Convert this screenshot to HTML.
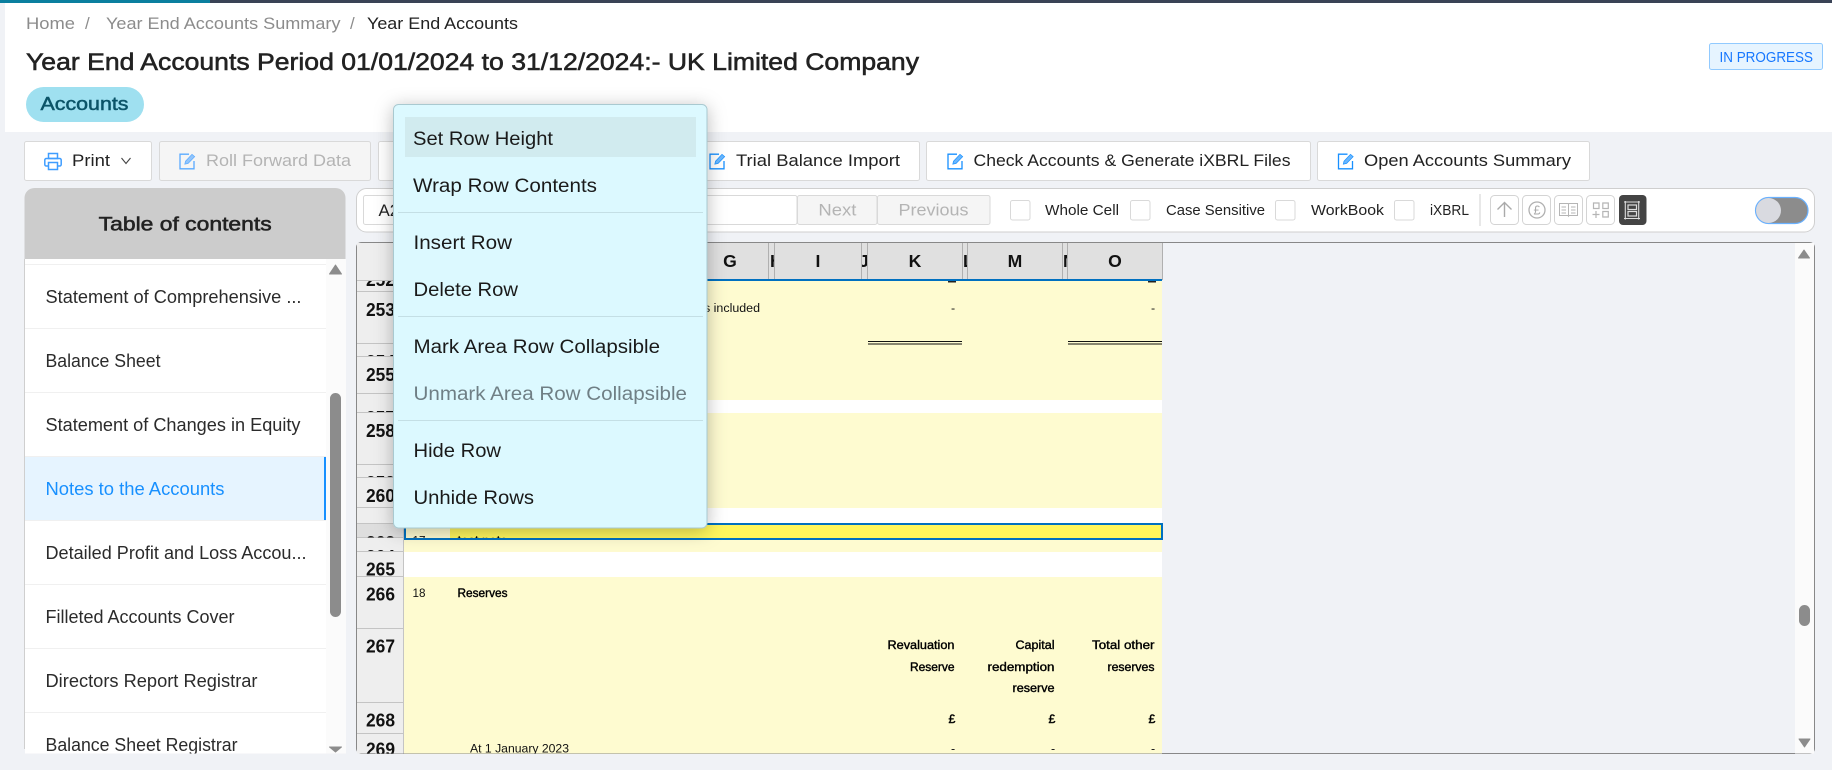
<!DOCTYPE html>
<html lang="en"><head><meta charset="utf-8"><title>Year End Accounts</title>
<style>
html,body{margin:0;padding:0;background:#f0f2f6;width:1832px;height:770px;overflow:hidden}
svg{display:block;font-family:"Liberation Sans",Arial,sans-serif}
.c{font-size:12.4px;fill:#111}
.b{font-size:12.4px;fill:#000;stroke:#000;stroke-width:.4px}
.n{font-size:18px;font-weight:bold;fill:#111}
.h{font-size:17.6px;font-weight:bold;fill:#111}
.s{font-size:18.6px;fill:#2b2b2b}
.m{font-size:19.3px;fill:#1a1a1a}
.t{font-size:16.9px;fill:#222}
.l{font-size:14.5px;fill:#222}
</style></head>
<body>
<svg xmlns="http://www.w3.org/2000/svg" width="1832" height="770" viewBox="0 0 1832 770">
<defs>
<filter id="sh" x="-20%" y="-20%" width="140%" height="140%"><feDropShadow dx="0" dy="3" stdDeviation="9" flood-color="#000" flood-opacity=".27"/></filter>
<clipPath id="side"><rect x="25" y="259" width="320" height="494.5"/></clipPath>
<clipPath id="sheet"><rect x="357" y="243" width="1457" height="510.5"/></clipPath>
<clipPath id="r252"><rect x="357" y="281" width="47" height="10"/></clipPath>
<clipPath id="r254"><rect x="357" y="343" width="47" height="13"/></clipPath>
<clipPath id="r257"><rect x="357" y="394" width="47" height="18"/></clipPath>
<clipPath id="r259"><rect x="357" y="464" width="47" height="13"/></clipPath>
<clipPath id="r263"><rect x="357" y="523" width="47" height="14.500"/></clipPath>
<clipPath id="r264"><rect x="357" y="538" width="47" height="13"/></clipPath>
<clipPath id="sel"><rect x="404" y="525" width="758" height="13"/></clipPath>
<clipPath id="cH"><rect x="769" y="243" width="5" height="36"/></clipPath>
<clipPath id="cJ"><rect x="862" y="243" width="5" height="36"/></clipPath>
<clipPath id="cL"><rect x="963" y="243" width="4" height="36"/></clipPath>
<clipPath id="cN"><rect x="1063" y="243" width="4" height="36"/></clipPath>
<g id="edit" fill="none"><path d="M10 1.200H1v14.600h14V8" stroke="currentColor" stroke-width="1.300"/><path d="M5.800 11.200l.7-3L13 1.300l2.700 2.400-6.600 6.700z" fill="currentColor" fill-opacity=".65" stroke="currentColor" stroke-width=".7"/></g>
</defs>

<!-- page / header -->
<rect width="1832" height="770" fill="#f0f2f6"/>
<rect x="5" y="3" width="1827" height="129" fill="#fff"/>
<rect width="1832" height="3" fill="#3a4356"/>
<rect width="210" height="3" fill="#0a7f9f"/>

<!-- breadcrumb -->
<g font-size="16.9" fill="#8c8c8c">
<text x="26" y="29" textLength="49" lengthAdjust="spacingAndGlyphs">Home</text>
<text x="85" y="29">/</text>
<text x="106" y="29" textLength="234.500" lengthAdjust="spacingAndGlyphs">Year End Accounts Summary</text>
<text x="350" y="29">/</text>
<text x="367" y="29" textLength="151" lengthAdjust="spacingAndGlyphs" fill="#222">Year End Accounts</text>
</g>
<text x="26" y="70" font-size="24" fill="#222" stroke="#222" stroke-width=".55" textLength="893" lengthAdjust="spacingAndGlyphs">Year End Accounts Period 01/01/2024 to 31/12/2024:- UK Limited Company</text>
<rect x="26" y="87" width="118" height="35" rx="17.500" fill="#9fe0f0"/>
<text x="40.500" y="110" font-size="18.600" fill="#0b5468" stroke="#0b5468" stroke-width=".5" textLength="88" lengthAdjust="spacingAndGlyphs">Accounts</text>
<rect x="1709.500" y="43.500" width="113" height="26" rx="2" fill="#e6f4ff" stroke="#91caff"/>
<text x="1719.500" y="62" font-size="14.500" fill="#1677ff" textLength="93.500" lengthAdjust="spacingAndGlyphs">IN PROGRESS</text>

<!-- toolbar -->
<g stroke="#d9d9d9" fill="#fff">
<rect x="24.500" y="141.500" width="127" height="39" rx="2"/>
<rect x="159.500" y="141.500" width="211" height="39" rx="2" fill="#f5f5f5"/>
<rect x="378.500" y="141.500" width="120" height="39" rx="2" fill="#fff"/>
<rect x="693.500" y="141.500" width="226" height="39" rx="2"/>
<rect x="926.500" y="141.500" width="384" height="39" rx="2"/>
<rect x="1317.500" y="141.500" width="272" height="39" rx="2"/>
</g>
<g fill="none" stroke="#3f9dff" stroke-width="1.500">
<rect x="48.500" y="153.500" width="9" height="5"/>
<rect x="44.800" y="158.500" width="16.400" height="7.500" rx="1.500"/>
<rect x="48.500" y="162.500" width="9" height="7" fill="#fff"/>
</g>
<text x="72" y="166" class="t" textLength="38" lengthAdjust="spacingAndGlyphs">Print</text>
<path d="M121.500 158l4.500 5.500 4.500-5.500" fill="none" stroke="#444" stroke-width="1.100"/>
<use href="#edit" x="179" y="153" color="#5aaaff"/>
<text x="206" y="166" class="t" style="fill:#b4b4b4" textLength="145" lengthAdjust="spacingAndGlyphs">Roll Forward Data</text>
<use href="#edit" x="709" y="153" color="#1890ff"/>
<text x="736" y="166" class="t" textLength="164" lengthAdjust="spacingAndGlyphs">Trial Balance Import</text>
<use href="#edit" x="947" y="153" color="#1890ff"/>
<text x="973.500" y="166" class="t" textLength="317" lengthAdjust="spacingAndGlyphs">Check Accounts &amp; Generate iXBRL Files</text>
<use href="#edit" x="1337.500" y="153" color="#1890ff"/>
<text x="1364" y="166" class="t" textLength="207" lengthAdjust="spacingAndGlyphs">Open Accounts Summary</text>

<!-- sidebar -->
<path d="M24.500 259v-61a10 10 0 0 1 10-10h301a10 10 0 0 1 10 10v61z" fill="#cccccc"/>
<text x="98.700" y="230.500" font-size="19.300" fill="#222" stroke="#222" stroke-width=".55" textLength="173" lengthAdjust="spacingAndGlyphs">Table of contents</text>
<rect x="25" y="259" width="321" height="494.500" fill="#fff"/>
<rect x="326" y="259" width="20" height="494.500" fill="#fbfbfb"/>
<rect x="24" y="259" width="1" height="490" fill="#cfcfcf"/>
<rect x="25" y="456" width="301" height="64" fill="#e6f4ff"/>
<rect x="324" y="456" width="2" height="64" fill="#1890ff"/>
<g fill="#f0f0f0">
<rect x="25" y="264" width="301" height="1"/><rect x="25" y="328" width="301" height="1"/>
<rect x="25" y="392" width="301" height="1"/><rect x="25" y="456" width="301" height="1"/>
<rect x="25" y="520" width="301" height="1"/><rect x="25" y="584" width="301" height="1"/>
<rect x="25" y="648" width="301" height="1"/><rect x="25" y="712" width="301" height="1"/>
</g>
<g clip-path="url(#side)">
<text x="45.500" y="303" class="s" textLength="256" lengthAdjust="spacingAndGlyphs">Statement of Comprehensive ...</text>
<text x="45.500" y="367" class="s" textLength="115" lengthAdjust="spacingAndGlyphs">Balance Sheet</text>
<text x="45.500" y="431" class="s" textLength="255" lengthAdjust="spacingAndGlyphs">Statement of Changes in Equity</text>
<text x="45.500" y="495" class="s" style="fill:#1890ff" textLength="179" lengthAdjust="spacingAndGlyphs">Notes to the Accounts</text>
<text x="45.500" y="559" class="s" textLength="261" lengthAdjust="spacingAndGlyphs">Detailed Profit and Loss Accou...</text>
<text x="45.500" y="623" class="s" textLength="189" lengthAdjust="spacingAndGlyphs">Filleted Accounts Cover</text>
<text x="45.500" y="687" class="s" textLength="212" lengthAdjust="spacingAndGlyphs">Directors Report Registrar</text>
<text x="45.500" y="751" class="s" textLength="192" lengthAdjust="spacingAndGlyphs">Balance Sheet Registrar</text>
</g>
<path d="M335.500 265l6 9h-12z" fill="#8c8c8c" stroke="#8c8c8c" stroke-linejoin="round"/>
<path d="M335.500 752l6-5h-12z" fill="#8c8c8c" stroke="#8c8c8c" stroke-linejoin="round"/>
<rect x="330" y="393" width="11" height="224" rx="5.500" fill="#8c8c8c"/>

<!-- find bar -->
<rect x="356.500" y="188.500" width="1458" height="43.500" rx="10" fill="#fff" stroke="#cfcfcf"/>
<rect x="363.500" y="195.500" width="433.500" height="29" rx="2" fill="#fff" stroke="#d9d9d9"/>
<text x="378.500" y="216" class="t">A2</text>
<rect x="797.500" y="195.500" width="79.500" height="29" rx="2" fill="#f5f5f5" stroke="#d9d9d9"/>
<rect x="877.500" y="195.500" width="112.500" height="29" rx="2" fill="#f5f5f5" stroke="#d9d9d9"/>
<text x="818.400" y="215.500" class="t" style="fill:#b4b4b4" textLength="38" lengthAdjust="spacingAndGlyphs">Next</text>
<text x="898.500" y="215.500" class="t" style="fill:#b4b4b4" textLength="70" lengthAdjust="spacingAndGlyphs">Previous</text>
<g fill="#fff" stroke="#d9d9d9">
<rect x="1010.500" y="200.500" width="19.500" height="19.500" rx="2"/>
<rect x="1130.500" y="200.500" width="19.500" height="19.500" rx="2"/>
<rect x="1275.500" y="200.500" width="19.500" height="19.500" rx="2"/>
<rect x="1394.500" y="200.500" width="19.500" height="19.500" rx="2"/>
</g>
<text x="1045" y="215" class="l" textLength="74" lengthAdjust="spacingAndGlyphs">Whole Cell</text>
<text x="1166" y="215" class="l" textLength="99" lengthAdjust="spacingAndGlyphs">Case Sensitive</text>
<text x="1311" y="215" class="l" textLength="73" lengthAdjust="spacingAndGlyphs">WorkBook</text>
<text x="1430" y="215" class="l" textLength="39" lengthAdjust="spacingAndGlyphs">iXBRL</text>
<rect x="1479.500" y="194" width="1" height="32" fill="#d0d0d0"/>
<g fill="#fff" stroke="#d4d4d4">
<rect x="1490.500" y="195.500" width="28" height="29" rx="4"/>
<rect x="1522.500" y="195.500" width="28" height="29" rx="4"/>
<rect x="1554.500" y="195.500" width="28" height="29" rx="4"/>
<rect x="1586.500" y="195.500" width="28" height="29" rx="4"/>
</g>
<rect x="1619" y="195" width="27.500" height="30" rx="4" fill="#444"/>
<path d="M1504.500 217v-14.500M1497.500 209.500l7-7 7 7" fill="none" stroke="#aaa" stroke-width="1.400"/>
<circle cx="1537" cy="210" r="8" fill="none" stroke="#b0b0b0" stroke-width="1.300"/>
<text x="1537" y="214.500" font-size="12.500" text-anchor="middle" fill="#aaa">£</text>
<path d="M1559.500 203.500h8.500l.5.800.5-.8h8.500v12h-8.500l-.5.800-.5-.8h-8.500zM1568.500 204.500v11M1561.500 207h4.500M1561.500 210h4.500M1561.500 213h4.500M1571 207h4.500M1571 210h4.500M1571 213h4.500" fill="none" stroke="#b5b5b5" stroke-width="1"/>
<path d="M1593.500 203h5.500v5.500h-5.500zM1602.800 203h5.500v5.500h-5.500zM1602.800 211.500h5.500v5.500h-5.500zM1592.500 214.500h7M1596 211v7" fill="none" stroke="#b5b5b5" stroke-width="1.200"/>
<path d="M1624 202h16M1624 218.500h16M1625.300 201v18.500M1638.700 201v18.500" fill="none" stroke="#ddd" stroke-width="1.100"/>
<rect x="1628" y="205" width="8.500" height="4.500" fill="none" stroke="#ddd" stroke-width="1.200"/>
<rect x="1628" y="211.500" width="8.500" height="4.500" fill="none" stroke="#ddd" stroke-width="1.200"/>
<rect x="1755.500" y="197.500" width="52.500" height="26" rx="13" fill="#8c8c8c" stroke="#69b1ff" stroke-width="1.200"/>
<circle cx="1768.500" cy="210.500" r="12.500" fill="#d9dae0"/>

<!-- sheet -->
<rect x="356.500" y="242.500" width="1458" height="511" rx="5" fill="#f0f2f6" stroke="#888"/>
<g clip-path="url(#sheet)">
<rect x="1795" y="243" width="19" height="511" fill="#fbfbfb"/>
<rect x="357" y="243" width="805" height="36" fill="#e0e0e0"/>
<rect x="357" y="243" width="47" height="511" fill="#eeeeee"/>
<rect x="404" y="281" width="758" height="119" fill="#fefbd0"/>
<rect x="404" y="400" width="758" height="13" fill="#fff"/>
<rect x="404" y="413" width="758" height="95" fill="#fefbd0"/>
<rect x="404" y="508" width="758" height="15" fill="#fff"/>
<rect x="404" y="523" width="758" height="29" fill="#fefbd0"/>
<rect x="404" y="552" width="758" height="25" fill="#fff"/>
<rect x="404" y="577" width="758" height="177" fill="#fefbd0"/>
<rect x="450" y="525" width="712" height="13" fill="#fff65c"/>
<rect x="357" y="523" width="47" height="15" fill="#dedede"/>
<rect x="404" y="279" width="758" height="2" fill="#0070c0"/>

<!-- column separators -->
<g fill="#b0b0b0">
<rect x="404" y="243" width="1" height="36"/><rect x="768" y="243" width="1" height="36"/><rect x="774" y="243" width="1" height="36"/>
<rect x="861" y="243" width="1" height="36"/><rect x="867" y="243" width="1" height="36"/>
<rect x="962" y="243" width="1" height="36"/><rect x="967" y="243" width="1" height="36"/>
<rect x="1062" y="243" width="1" height="36"/><rect x="1067" y="243" width="1" height="36"/>
<rect x="1162" y="243" width="1" height="37"/>
</g>
<text x="730" y="267" class="h" text-anchor="middle">G</text>
<text x="770" y="267" class="h" clip-path="url(#cH)">H</text>
<text x="818" y="267" class="h" text-anchor="middle">I</text>
<text x="859" y="267" class="h" clip-path="url(#cJ)">J</text>
<text x="915" y="267" class="h" text-anchor="middle">K</text>
<text x="963" y="267" class="h" clip-path="url(#cL)">L</text>
<text x="1015" y="267" class="h" text-anchor="middle">M</text>
<text x="1063" y="267" class="h" clip-path="url(#cN)">N</text>
<text x="1115" y="267" class="h" text-anchor="middle">O</text>

<!-- row separators -->
<g fill="#c4c4c4">
<rect x="357" y="280" width="47" height="1"/><rect x="357" y="291" width="47" height="1"/><rect x="357" y="343" width="47" height="1"/>
<rect x="357" y="356" width="47" height="1"/><rect x="357" y="393" width="47" height="1"/><rect x="357" y="412" width="47" height="1"/>
<rect x="357" y="464" width="47" height="1"/><rect x="357" y="477" width="47" height="1"/><rect x="357" y="507" width="47" height="1"/>
<rect x="357" y="523" width="47" height="1"/><rect x="357" y="537" width="47" height="1"/><rect x="357" y="551" width="47" height="1"/>
<rect x="357" y="576" width="47" height="1"/><rect x="357" y="628" width="47" height="1"/><rect x="357" y="702" width="47" height="1"/>
<rect x="357" y="733" width="47" height="1"/>
<rect x="403" y="243" width="1" height="511"/>
</g>

<!-- row numbers -->
<g>
<text x="366" y="286" class="n" textLength="29" lengthAdjust="spacingAndGlyphs" clip-path="url(#r252)">252</text>
<text x="366" y="316" class="n" textLength="29" lengthAdjust="spacingAndGlyphs">253</text>
<text x="366" y="368" class="n" textLength="29" lengthAdjust="spacingAndGlyphs" clip-path="url(#r254)">254</text>
<text x="366" y="381" class="n" textLength="29" lengthAdjust="spacingAndGlyphs">255</text>
<text x="366" y="424" class="n" textLength="29" lengthAdjust="spacingAndGlyphs" clip-path="url(#r257)">257</text>
<text x="366" y="437" class="n" textLength="29" lengthAdjust="spacingAndGlyphs">258</text>
<text x="366" y="489" class="n" textLength="29" lengthAdjust="spacingAndGlyphs" clip-path="url(#r259)">259</text>
<text x="366" y="502" class="n" textLength="29" lengthAdjust="spacingAndGlyphs">260</text>
<text x="366" y="549" class="n" textLength="29" lengthAdjust="spacingAndGlyphs" clip-path="url(#r263)">263</text>
<text x="366" y="563" class="n" textLength="29" lengthAdjust="spacingAndGlyphs" clip-path="url(#r264)">264</text>
<text x="366" y="575.500" class="n" textLength="29" lengthAdjust="spacingAndGlyphs">265</text>
<text x="366" y="600.500" class="n" textLength="29" lengthAdjust="spacingAndGlyphs">266</text>
<text x="366" y="652.500" class="n" textLength="29" lengthAdjust="spacingAndGlyphs">267</text>
<text x="366" y="726.500" class="n" textLength="29" lengthAdjust="spacingAndGlyphs">268</text>
<text x="366" y="755.500" class="n" textLength="29" lengthAdjust="spacingAndGlyphs">269</text>
</g>

<!-- cells -->
<rect x="948" y="281" width="8" height="1.500" fill="#222"/><rect x="1148" y="281" width="8" height="1.500" fill="#222"/>
<text x="704" y="312" class="c" textLength="56" lengthAdjust="spacingAndGlyphs">s included</text>
<text x="951" y="312" class="c">-</text><text x="1151" y="312" class="c">-</text>
<g fill="#111">
<rect x="868" y="341" width="94" height="1"/><rect x="868" y="343.500" width="94" height="1"/>
<rect x="1068" y="341" width="94" height="1"/><rect x="1068" y="343.500" width="94" height="1"/>
</g>
<g clip-path="url(#sel)">
<text x="412.500" y="544.500" class="c" textLength="13" lengthAdjust="spacingAndGlyphs">17</text>
<text x="457.500" y="544.500" class="b" textLength="50" lengthAdjust="spacingAndGlyphs">test note</text>
</g>
<rect x="405" y="524" width="757" height="15" fill="none" stroke="#0070c0" stroke-width="2"/>
<text x="412.500" y="597" class="c" textLength="13" lengthAdjust="spacingAndGlyphs">18</text>
<text x="457.500" y="597" class="b" textLength="50" lengthAdjust="spacingAndGlyphs">Reserves</text>
<text x="887.500" y="649" class="b" textLength="67" lengthAdjust="spacingAndGlyphs">Revaluation</text>
<text x="910" y="671" class="b" textLength="44.500" lengthAdjust="spacingAndGlyphs">Reserve</text>
<text x="1015.500" y="649" class="b" textLength="39" lengthAdjust="spacingAndGlyphs">Capital</text>
<text x="987.500" y="671" class="b" textLength="67" lengthAdjust="spacingAndGlyphs">redemption</text>
<text x="1012.500" y="692" class="b" textLength="42" lengthAdjust="spacingAndGlyphs">reserve</text>
<text x="1092" y="649" class="b" textLength="62.500" lengthAdjust="spacingAndGlyphs">Total other</text>
<text x="1107.500" y="671" class="b" textLength="47" lengthAdjust="spacingAndGlyphs">reserves</text>
<text x="948.500" y="723" class="b">£</text><text x="1048.500" y="723" class="b">£</text><text x="1148.500" y="723" class="b">£</text>
<text x="470" y="752.500" class="c" textLength="99" lengthAdjust="spacingAndGlyphs">At 1 January 2023</text>
<text x="951" y="752.500" class="c">-</text><text x="1051" y="752.500" class="c">-</text><text x="1151" y="752.500" class="c">-</text>

<!-- sheet scrollbar -->
<path d="M1804 250l5.500 8h-11z" fill="#8c8c8c" stroke="#8c8c8c" stroke-linejoin="round"/>
<path d="M1804.500 747l5.500-8h-11z" fill="#8c8c8c" stroke="#8c8c8c" stroke-linejoin="round"/>
<rect x="1799" y="605" width="11" height="21" rx="5.500" fill="#8c8c8c"/>
</g>

<!-- context menu -->
<rect x="393.500" y="104.500" width="313.500" height="423.500" rx="5" fill="#dcf9ff" stroke="#a9c9d0" filter="url(#sh)"/>
<rect x="405" y="117" width="291" height="40" fill="#d1ebef"/>
<g fill="#c4dfe5">
<rect x="398" y="212" width="305" height="1"/><rect x="398" y="316" width="305" height="1"/><rect x="398" y="420" width="305" height="1"/>
</g>
<text x="413" y="145" class="m" textLength="140" lengthAdjust="spacingAndGlyphs">Set Row Height</text>
<text x="413" y="192" class="m" textLength="184" lengthAdjust="spacingAndGlyphs">Wrap Row Contents</text>
<text x="413.500" y="249" class="m" textLength="98.500" lengthAdjust="spacingAndGlyphs">Insert Row</text>
<text x="413.500" y="296" class="m" textLength="104.500" lengthAdjust="spacingAndGlyphs">Delete Row</text>
<text x="413.500" y="353" class="m" textLength="246.500" lengthAdjust="spacingAndGlyphs">Mark Area Row Collapsible</text>
<text x="413.500" y="400" class="m" style="fill:#6f7f85" textLength="273.500" lengthAdjust="spacingAndGlyphs">Unmark Area Row Collapsible</text>
<text x="413.500" y="457" class="m" textLength="87.500" lengthAdjust="spacingAndGlyphs">Hide Row</text>
<text x="413.500" y="504" class="m" textLength="120.500" lengthAdjust="spacingAndGlyphs">Unhide Rows</text>
</svg>
</body></html>
